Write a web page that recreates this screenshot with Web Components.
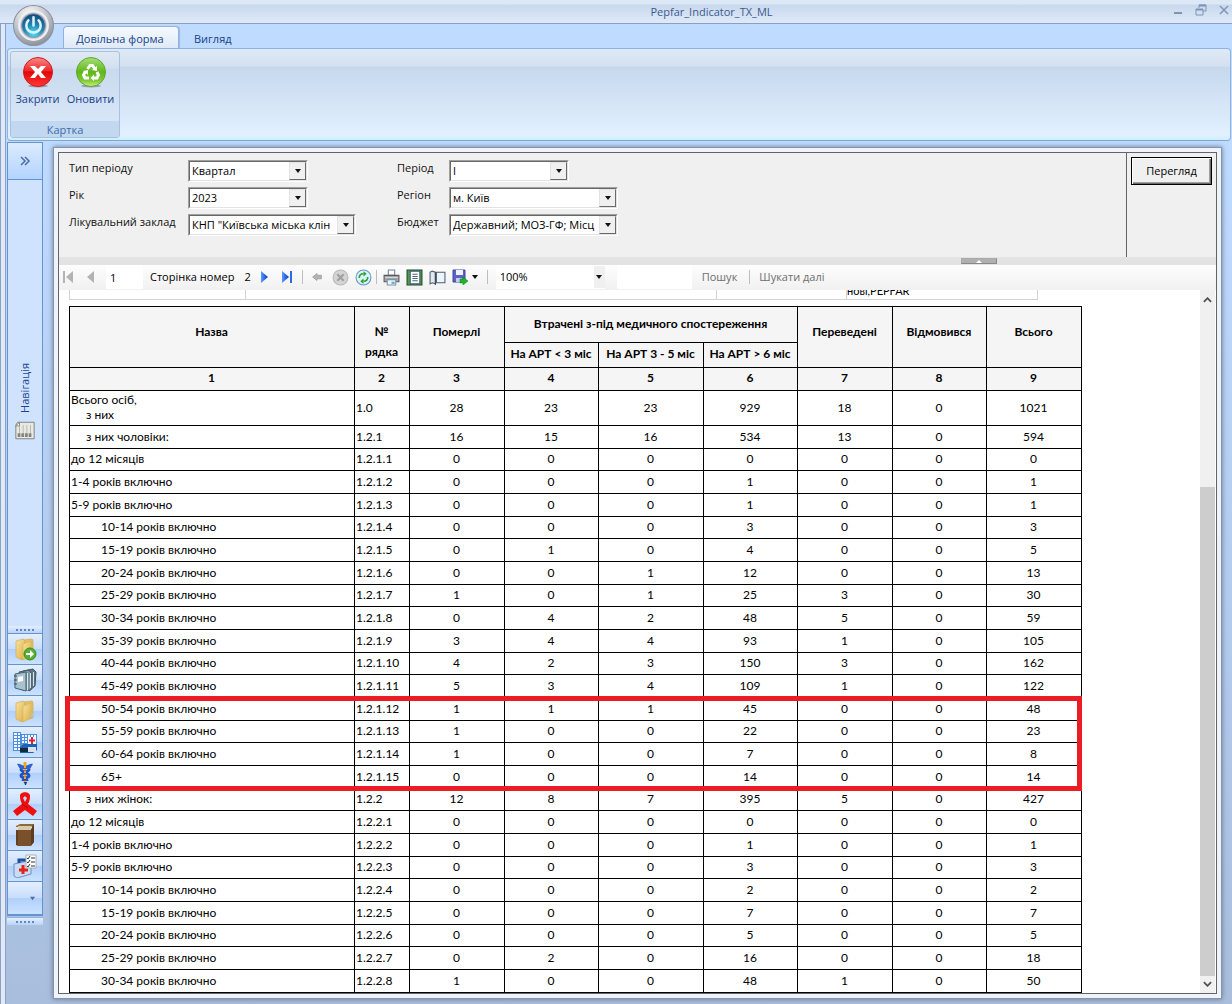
<!DOCTYPE html>
<html lang="uk">
<head>
<meta charset="utf-8">
<title>Pepfar_Indicator_TX_ML</title>
<style>
html,body{margin:0;height:100%}
body{font:11px/16px "Open Sans","Noto Sans",sans-serif;color:#111;overflow:hidden}
</style>
</head>
<body>
<app-window heading="Pepfar_Indicator_TX_ML">
  <app-ribbon slot="ribbon"></app-ribbon>
  <nav-rail slot="nav"></nav-rail>
  <report-panel>
    <param-form slot="params"></param-form>
    <report-toolbar slot="toolbar"></report-toolbar>
    <report-table></report-table>
  </report-panel>
</app-window>

<script>
const define = (name, html, setup) => {
  const tpl = document.createElement('template');
  tpl.innerHTML = html;
  customElements.define(name, class extends HTMLElement {
    constructor() {
      super();
      this.attachShadow({mode: 'open'}).append(tpl.content.cloneNode(true));
    }
    connectedCallback() { if (setup) setup(this, this.shadowRoot); }
  });
};

/* ---------- icons ---------- */
const folder = `<defs><linearGradient id="f1" x2="1" y2="1"><stop offset="0" stop-color="#f7e3a0"/><stop offset="1" stop-color="#dcae45"/></linearGradient></defs><path d="M10 3l9-1 1 1v16l-9 2z" fill="#e6c063" stroke="#cda349" stroke-width=".6"/><path d="M3 4l7-2 2 2v15l-3 4-6-3z" fill="url(#f1)" stroke="#d0a548" stroke-width=".6"/><path d="M10 7l8-3v15l-8 4z" fill="url(#f1)" stroke="#d6ae56" stroke-width=".6"/>`;
const ICONS = {
  orb: ['0 0 40 40', `<defs><radialGradient id="m" cx=".4" cy=".25" r=".8"><stop offset="0" stop-color="#fff"/><stop offset=".55" stop-color="#bfc3ca"/><stop offset="1" stop-color="#868b95"/></radialGradient><radialGradient id="b" cx=".5" cy=".85" r=".8"><stop offset="0" stop-color="#4fe2f5"/><stop offset=".5" stop-color="#2385b5"/><stop offset="1" stop-color="#174b7c"/></radialGradient></defs><circle cx="20" cy="20" r="19.500" fill="url(#m)" stroke="#8d929c"/><circle cx="20" cy="20" r="14" fill="#c9cdd4" stroke="#eef0f3" stroke-width="2"/><circle cx="20" cy="20" r="11.500" fill="url(#b)" stroke="#8b97a6"/><path d="M15 15a7 7 0 1 0 10 0M20 12v8" fill="none" stroke="#d8f3fb" stroke-width="2.500" stroke-linecap="round"/>`],
  close: ['0 0 32 32', `<defs><linearGradient id="r" x2="0" y2="1"><stop offset="0" stop-color="#f98a8a"/><stop offset=".45" stop-color="#ee2a2a"/><stop offset=".5" stop-color="#e30505"/><stop offset="1" stop-color="#ff3a3a"/></linearGradient></defs><ellipse cx="16" cy="30" rx="10" ry="1.500" fill="#8fa0b5"/><circle cx="16" cy="16" r="14.500" fill="url(#r)" stroke="#d31818"/><path d="M8 10h5l3 3 3-3h5l-5 6 5 6h-5l-3-4-3 4H8l5-6z" fill="#fff"/>`],
  recycle: ['0 0 32 32', `<defs><linearGradient id="g" x2="0" y2="1"><stop offset="0" stop-color="#a8dd79"/><stop offset=".5" stop-color="#5fb81a"/><stop offset=".8" stop-color="#7fca35"/><stop offset="1" stop-color="#d3ef8c"/></linearGradient></defs><ellipse cx="16" cy="30" rx="10" ry="1.500" fill="#8fa0b5"/><circle cx="16" cy="16" r="14.500" fill="url(#g)" stroke="#64a52c"/><g fill="none" stroke="#fff" stroke-width="3"><path d="M12.500 13l2.500-3.500h2.500L20 13"/><path d="M22 16l1.500 3-1.500 3h-4"/><path d="M14 22h-4l-1.500-3 2-3.500"/></g><path d="M22 10v5l-5-1zM19 18.500v6.500l-3.500-3zM8 15l5-1 0 5z" fill="#fff"/>`],
  minimize: ['0 0 10 10', `<path d="M1 8h8" stroke="#7f95b6" stroke-width="2"/>`],
  restore: ['0 0 12 12', `<path d="M4 4V1h7v6H8" fill="none" stroke="#7f95b6"/><path d="M4 1.500h7M1 5.500h7" stroke="#7f95b6" stroke-width="2"/><path d="M1 5v6h7V5" fill="none" stroke="#7f95b6"/>`],
  exit: ['0 0 10 10', `<path d="M1 1l8 8M9 1L1 9" stroke="#7f95b6" stroke-width="1.500"/>`],
  chevrons: ['0 0 12 12', `<path d="M2 2l4 4-4 4M6 2l4 4-4 4" fill="none" stroke="#4a6ea8" stroke-width="1.500"/>`],
  card: ['0 0 24 20', `<path d="M4 1h18v18H2V4z" fill="#e9e9e4" stroke="#7d7d7a"/><path d="M6 4v9M10 4v9M14 4v9M18 4v9" stroke="#b6b6ae" stroke-width="1"/><path d="M4 15h16" stroke="#85857f" stroke-width="4" stroke-dasharray="3 1"/><path d="M2 5l4-4v4z" fill="#fff" stroke="#85857f"/>`],
  folderGo: ['0 0 24 24', folder + `<circle cx="17" cy="17" r="6" fill="#58b030" stroke="#3b8a1d"/><path d="M13 16h4v-3l4 4-4 4v-3h-4z" fill="#fff"/>`],
  folder: ['0 0 24 24', folder + `<path d="M18 14h2v5h-2z" fill="#a9c9b2"/>`],
  binders: ['0 0 24 24', `<path d="M10 3l10-2 3 3-1 14-6 5z" fill="#5b7684" stroke="#3f5661"/><path d="M6 4l10-2 2 3v17h-9z" fill="#7d98a5" stroke="#415863"/><path d="M2 6l11-2v19L2 20z" fill="#a8c2cf" stroke="#46616e"/><path d="M5 9l5-1v5l-5 1z" fill="#fff"/><path d="M1 8h3M1 12h3M1 16h3" stroke="#3b4b53"/><path d="M14.500 5v17M17.500 5v15M20.500 4v14" stroke="#dbe5e9"/>`],
  clinic: ['0 0 24 24', `<path d="M0 2h8v19H0z" fill="#4d8fdc"/><path d="M8 4h16v12H8z" fill="#4d8fdc"/><g fill="#f2f8ff"><path d="M1 3h3v2H1zM5 3h2v2H5zM1 6h3v2H1zM5 6h2v2H5zM1 9h3v2H1zM5 9h2v2H5zM1 12h3v2H1zM5 12h2v2H5zM1 15h3v2H1zM5 15h2v2H5zM1 18h3v2H1zM5 18h2v2H5z"/><path d="M9 5h2v2H9zM12 5h2v2h-2zM15 5h2v2h-2zM18 5h2v2h-2zM21 5h2v2h-2zM9 8h2v2H9zM12 8h2v2h-2zM9 11h2v2H9zM12 11h2v2h-2z"/><path d="M15 7h8v7h-8z"/></g><path d="M19 7v7M16 10.500h6" stroke="#e12030" stroke-width="2"/><path d="M7 17l4-3h13v6l-4 3H7z" fill="#1c63b4"/><path d="M15 17h8v5h-8z" fill="#d8e2ee"/><path d="M7 18h8v4H7z" fill="#14283e"/>`],
  caduceus: ['0 0 24 24', `<path d="M12 1v21" stroke="#f3a71c" stroke-width="3"/><path d="M4 3c3-1 5 2 8 2s5-3 8-2l-3 5H7z" fill="#2f63cf"/><path d="M8 8c0 4 8 3 8 7 0 2-6 2-6 5M16 8c0 4-8 3-8 7 0 2 6 2 6 5" fill="none" stroke="#1e52c6" stroke-width="3"/><path d="M12 2v5M11 11h2M11 17h2" stroke="#f3a71c" stroke-width="2"/><path d="M11 21h3l-1 3h-1z" fill="#142fa0"/>`],
  ribbon: ['0 0 24 24', `<path d="M7 4c0-5 10-5 10 0 0 4-1 6-2 8l9 7-4 5-8-6-8 6-4-5 9-7C8 10 7 8 7 4z" fill="#f00d0d"/><path d="M12 4l2 2-2 4-2-4z" fill="#bcd6f7"/><path d="M9 12l6 4" stroke="#b00000"/>`],
  books: ['0 0 24 24', `<path d="M7 1h14v18l-2 2V3z" fill="#5d4a31"/><path d="M3 3l4-2h14l-3 3H3z" fill="#8a6a3b"/><path d="M5 3h13v4H5z" fill="#d8cba6"/><path d="M3 7h15v16H5l-2-1z" fill="#7a4f2b"/><path d="M4 7v15" stroke="#4c2f18"/><path d="M18 6l3-3v16l-3 4z" fill="#5d3b20"/>`],
  kit: ['0 0 24 24', `<path d="M1 10l14-3 3 2v11L4 24l-3-2z" fill="#c9dcf5" stroke="#6d8fc0"/><path d="M6 9V6h8v2" fill="none" stroke="#1e4fa0" stroke-width="3"/><path d="M10 11v9M6 16h9" stroke="#e2231a" stroke-width="3"/><path d="M13 1h10v13H13z" fill="#fff" stroke="#a8b0bb"/><path d="M14 4l1 1 2-3M18 4h4M14 8l1 1 2-3M18 8h4M14 12l1 1 2-3M18 12h4" fill="none" stroke="#333"/>`],
  down: ['0 0 8 6', `<path d="M1 1h6L4 5z" fill="#4a6ea8"/>`],
  first: ['0 0 16 16', `<path d="M3 2h2v12H3zM13 2v12L6 8z" fill="#b3b3b3"/>`],
  prev: ['0 0 16 16', `<path d="M11 2v12L4 8z" fill="#b3b3b3"/>`],
  next: ['0 0 16 16', `<defs><linearGradient id="n" x2="1"><stop offset="0" stop-color="#5c9bff"/><stop offset="1" stop-color="#003bc4"/></linearGradient></defs><path d="M6 2v12l7-6z" fill="url(#n)"/>`],
  last: ['0 0 16 16', `<defs><linearGradient id="l" x2="1"><stop offset="0" stop-color="#5c9bff"/><stop offset="1" stop-color="#003bc4"/></linearGradient></defs><path d="M4 2v12l7-6z" fill="url(#l)"/><path d="M12 2h2v12h-2z" fill="#2e6be6"/>`],
  back: ['0 0 16 16', `<path d="M3 8l5-4v2h5v4H8v2z" fill="#b4b4b4" stroke="#a0a0a0"/>`],
  stop: ['0 0 16 16', `<circle cx="8" cy="8" r="7" fill="#d4d4d4" stroke="#b9b9b9"/><path d="M5 5l6 6M11 5l-6 6" stroke="#a0a0a0" stroke-width="2"/>`],
  refresh: ['0 0 16 16', `<circle cx="8" cy="8" r="7" fill="#dff0fb" stroke="#5f9ac4"/><path d="M4 8.500c0-3 1-4 4-4M12 7.500c0 3-1 4-4 4" fill="none" stroke="#25a335" stroke-width="1.500"/><path d="M8 2l3 2.500L8 7zM8 9v5l-3-2.500z" fill="#25a335"/>`],
  print: ['0 0 16 16', `<path d="M5 1h6v5H5z" fill="#fff" stroke="#6c87a3"/><path d="M1 6h14v6H1z" fill="#a5a5a8" stroke="#5a5b60"/><path d="M2 8h12" stroke="#d9d9dc"/><path d="M4 10h8v5H4z" fill="#eef5fb" stroke="#7b94aa"/><path d="M8 12h3v2H8z" fill="#53b1dc"/>`],
  layout: ['0 0 16 16', `<path d="M1 1h14v14H1z" fill="#4f9a50" stroke="#1d4a26"/><path d="M4 2h9v12H4z" fill="#fff" stroke="#3f5f77"/><path d="M6 5h5M6 7h5M6 9h5M6 11h5" stroke="#4c6580"/>`],
  setup: ['0 0 16 16', `<path d="M1 3l2-1 3 1v11l-3-1-2 1z" fill="#e2e9f0" stroke="#4e5f72"/><path d="M7 3h8v10H7z" fill="#edf4fb" stroke="#4e5f72"/><path d="M6 3v12" stroke="#3d4b5a"/>`],
  save: ['0 0 16 16', `<path d="M1 1h12v12H1z" fill="#5a62c8" stroke="#3f46a0"/><path d="M4 1h7v5H4z" fill="#eef1ff"/><path d="M4 9h6v4H4z" fill="#c5cbf2"/><path d="M8 10h3V8l5 4-5 4v-2H8z" fill="#22b32a" stroke="#128019" stroke-width=".5"/>`],
  drop: ['0 0 6 4', `<path d="M0 0h6L3 4z" fill="#111"/>`],
  up: ['0 0 10 6', `<path d="M1 5l4-4 4 4" fill="none" stroke="#505050" stroke-width="2"/>`],
  dn: ['0 0 10 6', `<path d="M1 1l4 4 4-4" fill="none" stroke="#505050" stroke-width="2"/>`]
};
customElements.define('ui-icon', class extends HTMLElement {
  connectedCallback() {
    if (this.shadowRoot) return;
    const [box, body] = ICONS[this.getAttribute('name')];
    const w = this.getAttribute('w') || 16, h = this.getAttribute('h') || w;
    this.attachShadow({mode: 'open'}).innerHTML =
      `<style>:host{display:block;flex:none;width:${w}px;height:${h}px}svg{display:block}</style>
       <svg width="${w}" height="${h}" viewBox="${box}" aria-hidden="true">${body}</svg>`;
  }
});

/* ---------- window frame ---------- */
define('app-window', `<style>
:host{display:flex;flex-direction:column;height:100vh;box-sizing:border-box;background:#bfdbff}
.title{display:flex;align-items:center;height:23px;border-bottom:1px solid #8b9fbf;color:#3b5a8f;
 background:linear-gradient(#dce8f6 0 4px,#c8d8ed 5px,#dfeaf8)}
.title h1{flex:1;margin:0;padding-left:250px;text-align:center;font:11px/16px "Open Sans","Noto Sans",sans-serif}
.ctl{display:flex;gap:12px;padding:0 3px 4px 0}
.ctl button{border:0;padding:0;background:none}
.frame{flex:1;min-height:0;display:flex;flex-direction:column;border-left:1px solid #8ba0c2}
.inner{flex:1;min-height:0;display:flex;flex-direction:column;margin-left:4px;border-left:1px solid #8ba0c2;background:#bfdbff}
.pad{flex:1;min-height:0;display:flex;flex-direction:column;background:#dfe9f8}
.work{flex:1;min-height:0;display:flex;gap:10px;padding:1px 10px 5px 1px;
 background:linear-gradient(#bfdbff,#a9bedd 100%)}
.orb{position:absolute;left:13px;top:5px;border:0;padding:0;background:none}
::slotted(report-panel){flex:1;min-width:0;margin-top:5px}
</style>
<div class="title"><h1></h1><div class="ctl"><button aria-label="Згорнути"><ui-icon name="minimize" w="10"></ui-icon></button><button aria-label="Відновити"><ui-icon name="restore" w="12"></ui-icon></button><button aria-label="Вийти"><ui-icon name="exit" w="10"></ui-icon></button></div></div>
<div class="pad"><div class="frame"><div class="inner">
<slot name="ribbon"></slot>
<div class="work"><slot name="nav"></slot><slot></slot></div>
</div></div></div>
<button class="orb" aria-label="Меню"><ui-icon name="orb" w="41"></ui-icon></button>`,
(el, root) => { root.querySelector('h1').textContent = el.getAttribute('heading'); });

/* ---------- ribbon ---------- */
define('app-ribbon', `<style>
:host{display:block;color:#15428b}
.tabs{display:flex;height:24px;padding-left:57px;align-items:flex-end}
.tabs button{height:22px;border:0;background:none;font:inherit;color:inherit;padding:3px 15px 0}
.tabs .on{border:1px solid #8db2e3;border-bottom:0;border-radius:4px 4px 0 0;padding:2px 12px 0 10px;
 min-width:116px;background:linear-gradient(#f5faff,#dfe9f6);box-shadow:1px 0 1px #9bb8dd}
.body{display:flex;height:91px;margin:0 1px;border:1px solid #8db2e3;border-bottom-color:#87a4cf;border-radius:4px;
 background:linear-gradient(#dee9f5,#d4e1f1 17px,#c7d8ed 18px,#e2f0ff 86px,#c9f2fb)}
.group{display:flex;flex-direction:column;width:108px;margin:2px;border:1px solid #a9c1de;border-radius:3px;
 background:linear-gradient(#dfe9f5,#d2e0f0 16px,#c9daee 17px,#dceafa)}
.acts{flex:1;display:flex;gap:2px;padding:4px 1px 0}
.acts button{display:flex;flex-direction:column;align-items:center;gap:3px;border:0;padding:0;background:none;font:inherit;color:inherit;width:51px}
.cap{height:16px;line-height:17px;text-align:center;background:#c1d8f0;color:#3e6aaa}
</style>
<div class="tabs" role="tablist"><button class="on" role="tab">Довільна форма</button><button role="tab">Вигляд</button></div>
<div class="body"><div class="group"><div class="acts"><button><ui-icon name="close" w="32"></ui-icon>Закрити</button><button><ui-icon name="recycle" w="32"></ui-icon>Оновити</button></div><div class="cap">Картка</div></div></div>`);

/* ---------- navigation rail ---------- */
define('nav-rail', `<style>
:host{display:flex;flex-direction:column;flex:none;width:36px}
button{display:flex;align-items:center;justify-content:center;box-sizing:border-box;width:36px;height:31px;padding:0;
 border:1px solid #6593cf;border-top:0;background:linear-gradient(#e3efff,#c8ddfb 50%,#b0cffa 51%,#cbe2ff)}
.open{height:38px;border-top:1px solid #6593cf;background:linear-gradient(#dcebff,#b3d3ff)}
.pane{flex:1;display:flex;flex-direction:column;align-items:center;justify-content:center;gap:8px;box-sizing:border-box;
 border:1px solid #6593cf;border-width:0 1px;background:#cfe3ff;color:#1c4599;padding-bottom:3px}
.pane span{writing-mode:vertical-rl;transform:rotate(180deg);font-size:11px;line-height:18px}
.grip{height:7px;border-bottom:1px solid #6593cf;background:linear-gradient(#e3efff,#b8d3f8);border-inline:1px solid #6593cf;
 display:flex;align-items:center;justify-content:center}
.grip i{width:18px;height:2px;background:repeating-linear-gradient(90deg,#5e86c4 0 2px,transparent 2px 4px)}
.more{height:34px;padding-left:14px;border-bottom-width:2px}
.end{margin-top:1px;border:0;border-top:1px solid #8fb4e6}
.space{height:74px}
</style>
<button class="open" aria-label="Розгорнути"><ui-icon name="chevrons" w="12"></ui-icon></button>
<div class="pane"><span>Навігація</span><ui-icon name="card" w="22" h="19"></ui-icon></div>
<div class="grip"><i></i></div>
<div class="items"></div>
<button class="more" aria-label="Більше"><ui-icon name="down" w="7" h="5"></ui-icon></button>
<div class="grip end"><i></i></div><div class="space"></div>`,
(el, root) => {
  root.querySelector('.items').innerHTML = [['folderGo', 'Імпорт'], ['binders', 'Картотека'], ['folder', 'Документи'], ['clinic', 'Заклади'],
    ['caduceus', 'Медицина'], ['ribbon', 'ВІЛ'], ['books', 'Довідники'], ['kit', 'Звіти']]
    .map(([n, t]) => `<button aria-label="${t}"><ui-icon name="${n}" w="24"></ui-icon></button>`).join('');
});

/* ---------- report panel ---------- */
define('report-panel', `<style>
:host{display:flex;flex-direction:column;box-sizing:border-box;border:1px solid #8e9299;background:#edf4ff;padding:4px;
 box-shadow:0 0 5px #62789b}
.box{flex:1;min-height:0;display:flex;flex-direction:column;border:1px solid #646464;background:#fff}
.view{flex:1;min-height:0;display:flex}
.page{flex:1;min-width:0;overflow:hidden;display:flex;flex-direction:column;padding-left:10px}
.bar{display:flex;flex-direction:column;align-items:center;width:15px;background:#f0f0f0;padding:7px 0 6px;margin-right:1px}
.track{flex:1;display:flex;flex-direction:column;justify-content:flex-end;align-self:stretch;margin:3px 0 5px}
.track i{flex:0 0 73%;background:#cdcdcd}
</style>
<div class="box"><slot name="params"></slot><slot name="toolbar"></slot>
<div class="view"><div class="page"><slot></slot></div>
<div class="bar"><ui-icon name="up" w="9" h="6"></ui-icon><div class="track"><i></i></div><ui-icon name="dn" w="9" h="6"></ui-icon></div></div></div>`);

/* ---------- combo box ---------- */
define('combo-box', `<style>
:host{display:flex;align-items:center;height:27px}
label{flex:none;width:var(--label,119px);padding-bottom:5px}
.f{position:relative;box-sizing:border-box;height:22px;width:var(--field,120px);border:1px solid;border-color:#a0a0a0 #fff #fff #a0a0a0}
select{appearance:none;display:block;box-sizing:border-box;width:100%;height:20px;margin:0;border:1px solid;border-color:#696969 #e3e3e3 #e3e3e3 #696969;
 border-radius:0;background:#fff;font:inherit;color:#000;padding:0 17px 0 2px;outline:0}
.b{position:absolute;right:1px;top:1px;width:17px;height:18px;display:flex;align-items:center;justify-content:center;background:#f0f0f0;
 border:1px solid;border-color:#e3e3e3 #696969 #696969 #e3e3e3;box-sizing:border-box;pointer-events:none}
</style><label for="s"></label><div class="f"><select id="s"><option></option></select><div class="b"><ui-icon name="drop" w="8" h="4"></ui-icon></div></div>`,
(el, root) => {
  root.querySelector('label').textContent = el.getAttribute('label');
  root.querySelector('option').textContent = el.getAttribute('value');
});

define('param-form', `<style>
:host{display:block}
.top{display:flex;height:104px;background:#f0f0f0}
.fields{flex:1;display:flex;gap:41px;padding:4px 0 0 10px}
.col{display:flex;flex-direction:column}
.l{width:287px}.r{--label:52px}
.wide{--field:169px}
.run{width:90px;border-left:1px solid #646464;padding:4px;box-sizing:border-box}
.run button{box-sizing:border-box;width:81px;height:28px;border:1px solid #000;border-radius:0;background:#f0f0f0;font:inherit;color:#000;
 box-shadow:inset 1px 1px #fff,inset -1px -1px #696969,inset -2px -2px #a0a0a0;padding:0}
.split{height:8px;background:#e3e3e3;display:flex;justify-content:flex-end}
.split button{width:36px;height:6px;margin:1px 219px 0 0;border:1px solid #aaa;border-color:#aaa #888 #888 #aaa;background:#b0b0b0;padding:0;box-sizing:border-box;display:flex;justify-content:center}
.split i{border:3px solid transparent;border-top:0;border-bottom-color:#fff}
</style>
<div class="top"><div class="fields"><div class="col l"><combo-box label="Тип періоду" value="Квартал"></combo-box><combo-box label="Рік" value="2023"></combo-box><combo-box class="wide" label="Лікувальний заклад" value='КНП "Київська міська клін'></combo-box></div>
<div class="col r"><combo-box label="Період" value="I"></combo-box><combo-box class="wide" label="Регіон" value="м. Київ"></combo-box><combo-box class="wide" label="Бюджет" value="Державний; МОЗ-ГФ; Місц"></combo-box></div></div>
<div class="run"><button>Перегляд</button></div></div>
<div class="split"><button aria-label="Згорнути параметри"><i></i></button></div>`);

/* ---------- toolbar ---------- */
define('report-toolbar', `<style>
:host{display:flex;align-items:center;box-sizing:border-box;height:25px;background:linear-gradient(#fdfdfd,#f1f1f1);padding:0 0 1px 1px;color:#000}
button{border:0;background:none;padding:0;display:flex;align-items:center;flex:none}
.nav{width:23px;justify-content:flex-start}
.ico{width:23px;justify-content:center}
input{box-sizing:border-box;border:0;background:#fff;font:inherit;height:24px;padding:0 4px;outline:0}
.num{width:37px}
.txt{margin:0 10px 0 7px}
.gap{width:4px}
.sep{width:1px;height:14px;background:#bdbdbd;flex:none;margin:0 3px 0 1px}
.zoom{display:flex;align-items:center;background:#fff;height:24px;width:109px;margin-left:5px;position:relative}
select{appearance:none;border:0;background:none;font:inherit;width:100%;height:24px;padding:0 12px 0 4px;color:#000;outline:0}
.zoom span{position:absolute;right:0;top:1px;width:11px;height:22px;background:#f0f0f0;display:flex;align-items:center;justify-content:center;pointer-events:none}
.find{width:75px;margin:0 10px 0 12px}
a{color:#6f6f6f;text-decoration:none}
.last{margin-left:5px}
a+.sep{margin:0 9px 0 12px}
</style>
<button class="nav" aria-label="Перша"><ui-icon name="first"></ui-icon></button><button class="nav" aria-label="Попередня"><ui-icon name="prev"></ui-icon></button>
<input class="num" aria-label="Сторінка" value="1"><span class="txt">Сторінка номер</span><span>2</span>
<i class="gap"></i><button class="nav" aria-label="Наступна"><ui-icon name="next"></ui-icon></button><button class="nav" aria-label="Остання"><ui-icon name="last"></ui-icon></button>
<i class="sep"></i>
<button class="ico" aria-label="Назад"><ui-icon name="back" w="14"></ui-icon></button><button class="ico" aria-label="Зупинити"><ui-icon name="stop" w="17"></ui-icon></button><button class="ico" aria-label="Оновити"><ui-icon name="refresh" w="17"></ui-icon></button>
<i class="sep"></i>
<button class="ico" aria-label="Друк"><ui-icon name="print" w="17"></ui-icon></button><button class="ico" aria-label="Макет"><ui-icon name="layout" w="17"></ui-icon></button><button class="ico" aria-label="Параметри сторінки"><ui-icon name="setup" w="17"></ui-icon></button><button class="ico" aria-label="Експорт"><ui-icon name="save" w="16"></ui-icon></button><ui-icon name="drop" w="6" h="4"></ui-icon>
<i class="gap"></i><i class="sep last"></i>
<div class="zoom"><select aria-label="Масштаб"><option>100%</option></select><span><ui-icon name="drop" w="6" h="4"></ui-icon></span></div>
<input class="find" aria-label="Пошук у звіті"><a href="#find">Пошук</a><i class="sep"></i><a href="#next">Шукати далі</a>`);

/* ---------- report table ---------- */
const ages = ['до 12 місяців', '1-4 років включно', '5-9 років включно', '10-14 років включно', '15-19 років включно', '20-24 років включно', '25-29 років включно', '30-34 років включно',
  '35-39 років включно', '40-44 років включно', '45-49 років включно', '50-54 років включно', '55-59 років включно', '60-64 років включно', '65+'];
const men = ['0 0 0 0 0 0 0', '0 0 0 1 0 0 1', '0 0 0 1 0 0 1', '0 0 0 3 0 0 3', '0 1 0 4 0 0 5', '0 0 1 12 0 0 13', '1 0 1 25 3 0 30', '0 4 2 48 5 0 59', '3 4 4 93 1 0 105',
  '4 2 3 150 3 0 162', '5 3 4 109 1 0 122', '1 1 1 45 0 0 48', '1 0 0 22 0 0 23', '1 0 0 7 0 0 8', '0 0 0 14 0 0 14'];
const women = ['0 0 0 0 0 0 0', '0 0 0 1 0 0 1', '0 0 0 3 0 0 3', '0 0 0 2 0 0 2', '0 0 0 7 0 0 7', '0 0 0 5 0 0 5', '0 2 0 16 0 0 18', '1 0 0 48 1 0 50'];
const band = (data, code) => data.map((d, i) => [ages[i], `${code}.${i + 1}`, d, i > 2 ? 2 : 0]);
const rows = [['з них чоловіки:', '1.2.1', '16 15 16 534 13 0 594', 1], ...band(men, '1.2.1'), ['з них жінок:', '1.2.2', '12 8 7 395 5 0 427', 1], ...band(women, '1.2.2')];

define('report-table', `<style>
:host{display:block;font:12px/15px Lato,"Open Sans",sans-serif;color:#000}
.prev{display:flex;box-sizing:border-box;width:969px;height:10px;border:1px solid #d3d3d3;border-top:0;margin-bottom:6px;overflow:hidden}
.prev span{display:flex;align-items:flex-end;border-left:1px solid #d3d3d3;box-sizing:border-box;overflow:hidden;font-size:11px;line-height:15px;padding-bottom:1px}
.prev span:first-child{border:0}
.sheet{position:relative;width:1013px}
table{border-collapse:collapse;table-layout:fixed;width:1013px}
th,td{border:1px solid #000;padding:0 1px 2px 0;text-align:center;box-sizing:border-box}
th{background:#f5f5f5;font-weight:700;line-height:20px}
thead .up{vertical-align:top;padding-top:15px}
td:nth-child(1),td:nth-child(2){text-align:left;padding-left:1px}
.g1 td:first-child{padding-left:16px}
.sub{padding-left:15px}
.g2 td:first-child{padding-left:31px}
tbody tr{height:23px}tbody tr:nth-child(3n){height:22px}
tbody tr.all{height:35px}
.mark{position:absolute;left:-4px;right:0;top:390px;height:95px;box-sizing:border-box;border:5px solid #ec1c24;pointer-events:none}
</style>
<div class="prev"><span style="width:175px"></span><span style="width:471px"></span><span style="width:130px"></span><span>нові,PEPFAR</span></div>
<div class="sheet"><table>
<colgroup><col style="width:285px"><col style="width:55px"><col style="width:95px"><col style="width:94px"><col style="width:105px"><col style="width:94px"><col style="width:95px"><col style="width:94px"><col style="width:95px"></colgroup>
<thead><tr style="height:36px"><th class="up" rowspan="2">Назва</th><th class="up" rowspan="2">№<br>рядка</th><th class="up" rowspan="2">Померлі</th><th colspan="3">Втрачені з-під медичного спостереження</th><th class="up" rowspan="2">Переведені</th><th class="up" rowspan="2">Відмовився</th><th class="up" rowspan="2">Всього</th></tr>
<tr style="height:25px"><th>На АРТ &lt; 3 міс</th><th>На АРТ 3 - 5 міс</th><th>На АРТ &gt; 6 міс</th></tr>
<tr class="n" style="height:23px"></tr></thead>
<tbody></tbody></table><div class="mark"></div></div>`,
(el, root) => {
  root.querySelector('.n').innerHTML = [1, 2, 3, 4, 5, 6, 7, 8, 9].map(n => `<th>${n}</th>`).join('');
  const cells = s => s.split(' ').map(v => `<td>${v}</td>`).join('');
  root.querySelector('tbody').innerHTML = `<tr class="all"><td>Всього осіб,<br><span class="sub">з них</span></td><td>1.0</td>${cells('28 23 23 929 18 0 1021')}</tr>` +
    rows.map(([n, c, d, g]) => `<tr class="g${g}"><td>${n}</td><td>${c}</td>${cells(d)}</tr>`).join('');
});
</script>
</body>
</html>
